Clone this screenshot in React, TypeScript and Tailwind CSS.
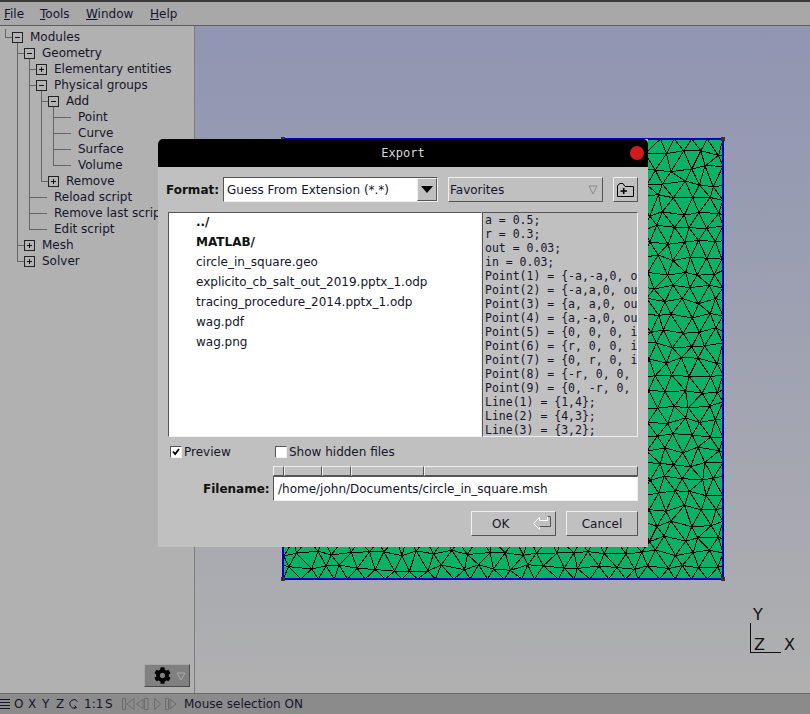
import { FaCog } from 'react-icons/fa';

const FONT = 'font-["DejaVu_Sans",sans-serif]';

// jittered triangular grid, stands in for the gmsh surface mesh
function buildMesh(size: number, pitch: number) {
  let seed = 12345;
  const rnd = () => {
    seed = (seed * 16807) % 2147483647;
    return seed / 2147483647 - 0.5;
  };
  const rowH = pitch * 0.87;
  const rows = Math.ceil(size / rowH);
  const cols = Math.ceil(size / pitch) + 1;
  const pts: [number, number][][] = [];
  for (let r = 0; r <= rows; r++) {
    const row: [number, number][] = [];
    for (let c = 0; c <= cols; c++) {
      const x = c * pitch - (r % 2 ? pitch / 2 : 0) + rnd() * pitch * 0.42;
      const y = r * rowH + rnd() * pitch * 0.42;
      row.push([Math.min(size, Math.max(0, x)), r === 0 ? 0 : r === rows ? size : Math.min(size, y)]);
    }
    pts.push(row);
  }
  let d = '';
  const seg = (a: [number, number], b: [number, number]) => {
    d += `M${a[0].toFixed(1)} ${a[1].toFixed(1)}L${b[0].toFixed(1)} ${b[1].toFixed(1)}`;
  };
  for (let r = 0; r <= rows; r++) {
    for (let c = 0; c <= cols; c++) {
      const p = pts[r][c];
      if (c < cols) seg(p, pts[r][c + 1]);
      if (r < rows) {
        seg(p, pts[r + 1][c]);
        const nc = r % 2 ? c - 1 : c + 1;
        if (nc >= 0 && nc <= cols) seg(p, pts[r + 1][nc]);
      }
    }
  }
  return d;
}

function TreeBox({ open }: { open: boolean }) {
  return (
    <span className="relative w-[11px] h-[11px] shrink-0 mr-[7px] border border-[#222] bg-[#b4b4b4]">
      <span className="absolute left-[2px] top-[4px] w-[5px] h-px bg-[#111]" />
      {!open && <span className="absolute left-[4px] top-[2px] w-px h-[5px] bg-[#111]" />}
    </span>
  );
}

const treeRows = [
  { label: 'Modules', indent: 'ml-[12px]', open: true },
  { label: 'Geometry', indent: 'ml-[24px]', open: true },
  { label: 'Elementary entities', indent: 'ml-[36px]', open: false },
  { label: 'Physical groups', indent: 'ml-[36px]', open: true },
  { label: 'Add', indent: 'ml-[48px]', open: true },
  { label: 'Point', indent: 'ml-[78px]' },
  { label: 'Curve', indent: 'ml-[78px]' },
  { label: 'Surface', indent: 'ml-[78px]' },
  { label: 'Volume', indent: 'ml-[78px]' },
  { label: 'Remove', indent: 'ml-[48px]', open: false },
  { label: 'Reload script', indent: 'ml-[54px]' },
  { label: 'Remove last script', indent: 'ml-[54px]' },
  { label: 'Edit script', indent: 'ml-[54px]' },
  { label: 'Mesh', indent: 'ml-[24px]', open: false },
  { label: 'Solver', indent: 'ml-[24px]', open: false },
];

function Tree() {
  return (
    <div className="relative w-[195px] shrink-0 bg-[#b1b1b1] border-r border-[#7c7c7c] pt-[3px]">
      <svg className="absolute left-0 top-0" width="194" height="300" shapeRendering="crispEdges">
        <path
          d="M5.5 3V11.5H12M17.5 17V235.5M17.5 27.5H24M17.5 219.5H24M17.5 235.5H24M29.5 33V203.5M29.5 43.5H36M29.5 59.5H36M29.5 171.5H47M29.5 187.5H47M29.5 203.5H47M41.5 65V155.5H48M41.5 75.5H48M53.5 81V139.5M53.5 91.5H71M53.5 107.5H71M53.5 123.5H71M53.5 139.5H71"
          fill="none"
          stroke="#666"
        />
      </svg>
      {treeRows.map((row) => (
        <div key={row.label} className={`relative flex items-center h-4 whitespace-nowrap text-[12px] text-[#15152b] ${row.indent}`}>
          {row.open !== undefined && <TreeBox open={row.open} />}
          {row.label}
        </div>
      ))}
      <div className="absolute left-[144px] top-[638px] w-[46px] h-[23px] flex items-center justify-end gap-[3px] pr-[3px] bg-[#808080] border border-t-[#a8a8a8] border-l-[#a8a8a8] border-r-[#4a4a4a] border-b-[#4a4a4a]">
        <FaCog className="w-[17px] h-[17px] text-black" />
        <svg width="10" height="10" viewBox="0 0 10 10" className="ml-[2px]">
          <path d="M1 2H9L5 9Z" fill="none" stroke="#aaa" />
        </svg>
      </div>
    </div>
  );
}

function Viewport() {
  return (
    <div className="relative flex-1 bg-gradient-to-b from-[#9095b2] to-[#b0b0b0] overflow-hidden">
      <svg className="absolute left-[85px] top-[110px]" width="448" height="448" shapeRendering="crispEdges">
        <g transform="translate(3 3)">
          <rect width="440" height="440" fill="#0bb265" />
          <path d={buildMesh(440, 17)} stroke="#000" strokeWidth="1" fill="none" />
          <rect width="440" height="440" fill="none" stroke="#0000c0" strokeWidth="2" />
        </g>
        <rect x="1" y="1" width="4" height="4" fill="#333" />
        <rect x="441" y="1" width="4" height="4" fill="#333" />
        <rect x="1" y="441" width="4" height="4" fill="#333" />
        <rect x="441" y="441" width="4" height="4" fill="#333" />
      </svg>
      <svg className="absolute left-[555px] top-[578px]" width="60" height="60">
        <path d="M0.5 19V48.5H31" fill="none" stroke="#111" shapeRendering="crispEdges" />
        <text x="3" y="16" fontSize="16" fill="#111" fontFamily="DejaVu Sans">Y</text>
        <text x="4" y="46" fontSize="16" fill="#111" fontFamily="DejaVu Sans">Z</text>
        <text x="34" y="46" fontSize="16" fill="#111" fontFamily="DejaVu Sans">X</text>
      </svg>
    </div>
  );
}

function StatusBar() {
  return (
    <div className="h-[21px] shrink-0 flex items-center bg-[#8b8b8b] border-t border-[#6a6a6a] text-[12px] text-[#15152b]">
      <svg width="11" height="12" className="shrink-0" shapeRendering="crispEdges">
        <path d="M0 1.5H10M0 4.5H10M0 7.5H10M0 10.5H10" stroke="#15152b" />
      </svg>
      <span className="ml-[3px] w-[14px]">O</span>
      <span className="w-[14px]">X</span>
      <span className="w-[14px]">Y</span>
      <span className="w-[12px]">Z</span>
      <svg width="12" height="13" viewBox="0 0 12 13" className="shrink-0">
        <path d="M8 9.5A4.2 4.2 0 1 1 9.5 3.5M6 10.5L8.5 9.5L6.5 7.5" fill="none" stroke="#15152b" />
      </svg>
      <span className="ml-[4px] w-[21px]">1:1</span>
      <span className="w-[16px]">S</span>
      <svg width="56" height="14" viewBox="0 0 56 14" className="shrink-0" shapeRendering="geometricPrecision">
        <path
          d="M1.5 1.5H4.5V12.5H1.5ZM13 1.5L6 7L13 12.5ZM22 2L15.5 7L22 12ZM23.5 1.5H27V12.5H23.5ZM33.5 1.5L39.5 7L33.5 12.5ZM44.5 1.5H47.5V12.5H44.5ZM49 2L55 7L49 12Z"
          fill="none"
          stroke="#6c6c6c"
        />
      </svg>
      <span className="ml-[7px] whitespace-nowrap">Mouse selection ON</span>
    </div>
  );
}

const up = 'border border-t-[#efefef] border-l-[#efefef] border-r-[#555] border-b-[#555] bg-[#c0c0c0]';
const down = 'border border-t-[#555] border-l-[#555] border-r-[#efefef] border-b-[#efefef]';

const files = [
  { name: '../', bold: true },
  { name: 'MATLAB/', bold: true },
  { name: 'circle_in_square.geo' },
  { name: 'explicito_cb_salt_out_2019.pptx_1.odp' },
  { name: 'tracing_procedure_2014.pptx_1.odp' },
  { name: 'wag.pdf' },
  { name: 'wag.png' },
];

const preview = [
  'a = 0.5;',
  'r = 0.3;',
  'out = 0.03;',
  'in = 0.03;',
  'Point(1) = {-a,-a,0, out};',
  'Point(2) = {-a,a,0, out};',
  'Point(3) = {a, a,0, out};',
  'Point(4) = {a,-a,0, out};',
  'Point(5) = {0, 0, 0, in};',
  'Point(6) = {r, 0, 0, in};',
  'Point(7) = {0, r, 0, in};',
  'Point(8) = {-r, 0, 0, in};',
  'Point(9) = {0, -r, 0, in};',
  'Line(1) = {1,4};',
  'Line(2) = {4,3};',
  'Line(3) = {3,2};',
];

function ExportDialog() {
  return (
    <div className="absolute left-[158px] top-[139px] w-[490px] h-[408px] bg-[#c0c0c0] text-[12px] text-[#15152b] flex flex-col">
      <div className="relative h-[28px] shrink-0 bg-black rounded-t-[5px] flex items-center justify-center">
        <span className={'font-["DejaVu_Sans_Mono",monospace] text-[12px] text-[#d8d8d8]'}>Export</span>
        <span className="absolute right-[4px] top-[7px] w-[14px] h-[14px] rounded-full bg-[#d01c1c]" />
      </div>

      <div className="flex items-center h-[25px] mt-[10px] ml-[8px] mr-[10px]">
        <span className="w-[57px] font-bold text-[#111]">Format:</span>
        <div className={`flex w-[215px] h-full bg-white ${down}`}>
          <span className="flex-1 pl-[3px] leading-[25px] whitespace-nowrap">Guess From Extension (*.*)</span>
          <span className={`w-[20px] flex items-center justify-center ${up}`}>
            <svg width="12" height="7"><path d="M0 0H12L6 7Z" fill="#000" /></svg>
          </span>
        </div>
        <div className={`flex items-center justify-between w-[155px] h-full ml-[10px] pl-[1px] pr-[4px] ${up}`}>
          <span>Favorites</span>
          <svg width="10" height="10"><path d="M1 1H9L5 9Z" fill="none" stroke="#8a8a8a" /></svg>
        </div>
        <div className={`flex items-center justify-center w-[25px] h-full ml-[10px] ${up}`}>
          <svg width="17" height="14" viewBox="0 0 17 14">
            <path d="M0.5 13.5V2.5L3 0.5H6L8 3.5H16.5V13.5Z" fill="none" stroke="#000" />
            <path d="M3.5 8H10M6.7 5V11" stroke="#000" strokeWidth="1.6" />
          </svg>
        </div>
      </div>

      <div className="flex h-[225px] mt-[10px] ml-[10px] mr-[10px]">
        <div className={`w-[314px] bg-white pl-[27px] ${down}`}>
          {files.map((f) => (
            <div key={f.name} className={`h-5 leading-[19px] whitespace-nowrap ${f.bold ? 'font-bold text-[#111]' : ''}`}>
              {f.name}
            </div>
          ))}
        </div>
        <div className={`flex-1 overflow-hidden pl-[2px] font-["DejaVu_Sans_Mono",monospace] text-[11.5px] leading-[14px] ${down}`}>
          {preview.map((line) => (
            <div key={line} className="whitespace-nowrap">{line}</div>
          ))}
        </div>
      </div>

      <div className="flex items-center h-[14px] mt-[8px] ml-[12px]">
        <span className={`relative w-[12px] h-[12px] bg-white ${down}`}>
          <svg width="10" height="10" className="absolute left-0 top-0">
            <path d="M2 4.5L4.2 7L8 2" fill="none" stroke="#000" strokeWidth="1.8" />
          </svg>
        </span>
        <span className="ml-[2px] w-[91px]">Preview</span>
        <span className={`w-[12px] h-[12px] bg-white ${down}`} />
        <span className="ml-[2px]">Show hidden files</span>
      </div>

      <div className="flex h-[10px] mt-[7px] ml-[115px] mr-[10px]">
        <span className={`w-[11px] ${up}`} />
        <span className={`w-[38px] ${up}`} />
        <span className={`w-[29px] ${up}`} />
        <span className={`w-[73px] ${up}`} />
        <span className={`flex-1 ${up}`} />
      </div>

      <div className="flex items-center h-[25px] ml-[45px] mr-[10px]">
        <span className="w-[70px] font-bold text-[#111]">Filename:</span>
        <div className={`flex-1 h-full bg-white pl-[4px] leading-[25px] whitespace-nowrap ${down}`}>
          /home/john/Documents/circle_in_square.msh
        </div>
      </div>

      <div className="flex justify-end gap-[10px] h-[25px] mt-[10px] mr-[10px]">
        <div className={`relative flex items-center w-[85px] ${up}`}>
          <span className="ml-[20px]">OK</span>
          <svg width="18" height="14" viewBox="0 0 18 14" className="absolute right-[4px] top-[4px]">
            <path d="M0.5 7.5L6.5 1.5V4.5H14.5V0.5H17.5V10.5H6.5V13.5Z" fill="none" stroke="#fff" />
            <path d="M14.5 0.5H17.5V10.5H6.5" fill="none" stroke="#555" />
          </svg>
        </div>
        <div className={`flex items-center justify-center w-[72px] ${up}`}>Cancel</div>
      </div>
    </div>
  );
}

export default function App() {
  return (
    <div className={`relative w-[810px] h-[714px] overflow-hidden flex flex-col bg-[#b1b1b1] ${FONT}`}>
      <div className="h-[26px] shrink-0 flex items-center bg-[#a8a8a8] border-t-2 border-[#3a3a3a] border-b border-b-[#5e5e5e] text-[12px] text-[#15152b]">
        <span className="ml-[4px] w-[36px]"><u>F</u>ile</span>
        <span className="w-[46px]"><u>T</u>ools</span>
        <span className="w-[64px]"><u>W</u>indow</span>
        <span><u>H</u>elp</span>
      </div>
      <div className="flex flex-1 min-h-0">
        <Tree />
        <Viewport />
      </div>
      <StatusBar />
      <ExportDialog />
    </div>
  );
}
